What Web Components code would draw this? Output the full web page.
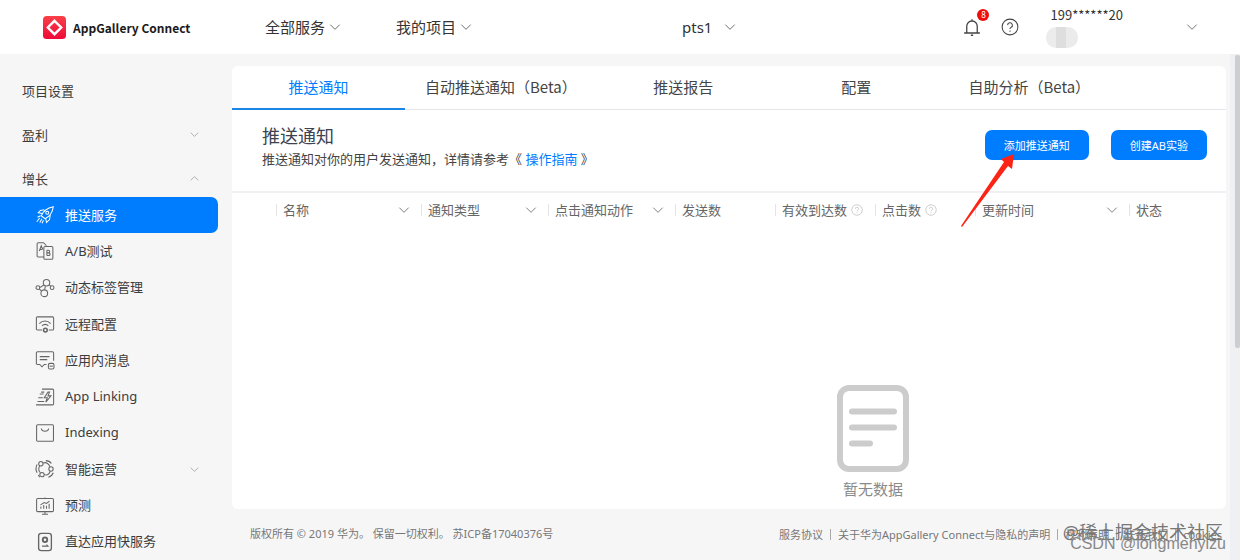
<!DOCTYPE html>
<html lang="zh-CN">
<head>
<meta charset="utf-8">
<title>AppGallery Connect</title>
<style>
html, body { margin: 0; }
body {
  font-family: "Noto Sans", "Noto Sans CJK SC", sans-serif;
  font-size: 13px;
  color: #444;
  background: #f6f6f7;
  --blue: #007dff;
  --line: #e2e4e8;
  --narrow: "Noto Sans CJK SC", sans-serif;
}
</style>
</head>
<body>
<agc-shell>
  <agc-topbar slot="top"></agc-topbar>
  <agc-sidebar slot="side">
    <agc-group>项目设置</agc-group>
    <agc-group arrow="down">盈利</agc-group>
    <agc-group arrow="up">增长</agc-group>
    <agc-item slot="items" icon="rocket" active>推送服务</agc-item>
    <agc-item slot="items" icon="ab">A/B测试</agc-item>
    <agc-item slot="items" icon="tags">动态标签管理</agc-item>
    <agc-item slot="items" icon="remote">远程配置</agc-item>
    <agc-item slot="items" icon="message">应用内消息</agc-item>
    <agc-item slot="items" icon="linking">App Linking</agc-item>
    <agc-item slot="items" icon="indexing">Indexing</agc-item>
    <agc-item slot="items" icon="smart" arrow="down">智能运营</agc-item>
    <agc-item slot="items" icon="predict">预测</agc-item>
    <agc-item slot="items" icon="direct">直达应用快服务</agc-item>
  </agc-sidebar>
  <agc-panel>
    <agc-tabs slot="tabs">
      <agc-tab active>推送通知</agc-tab>
      <agc-tab>自动推送通知（Beta）</agc-tab>
      <agc-tab>推送报告</agc-tab>
      <agc-tab>配置</agc-tab>
      <agc-tab>自助分析（Beta）</agc-tab>
    </agc-tabs>
    <agc-intro slot="intro">
      <agc-button slot="actions" pointed>添加推送通知</agc-button>
      <agc-button slot="actions">创建AB实验</agc-button>
    </agc-intro>
    <agc-table></agc-table>
    <agc-empty>暂无数据</agc-empty>
  </agc-panel>
  <agc-footer slot="foot"></agc-footer>
</agc-shell>

<script>
const define = (name, render) => customElements.define(name, class extends HTMLElement {
  constructor() {
    super();
    this.attachShadow({ mode: 'open' });
  }
  connectedCallback() {
    this.shadowRoot.innerHTML = render(this);
  }
});

const icons = {
  down: '<path d="M5 8.5l7 7 7-7"/>',
  up: '<path d="M5 15.5l7-7 7 7"/>',
  bell: '<path d="M1.500 20h21M5 20v-9a7 7 0 0 1 14 0v9M12 4V1.500M10.500 23h3" stroke-width="1.700"/>',
  help: '<circle cx="12" cy="12" r="10.500"/><path d="M8.800 9.500a3.200 3.200 0 1 1 4.600 3c-1 .5-1.400 1-1.400 2M12 16.500v1.700"/>',
  rocket: '<path d="M7 13c2-5 7-10 16-12-1 9-5 13-11 16l-5-4zM8 10L3 9l3-3 5-1M13 17l1 5 4-4 1-6M6 13l-4 2M5 16l-4 5M8 17l-3 5M10 19l-2 4"/><circle cx="15" cy="9" r="2"/>',
  ab: '<path d="M10 20H3a1.500 1.500 0 0 1-1.500-1.500v-16A1.500 1.500 0 0 1 3 1h7l4 4M12 6h9a1.500 1.500 0 0 1 1.500 1.500v14A1.500 1.500 0 0 1 21 23h-9a1.500 1.500 0 0 1-1.500-1.500v-14A1.500 1.500 0 0 1 12 6zM4.500 12l2.500-7 2 5M5.300 10h3M14.500 11v7M14.500 11h2a1.700 1.700 0 0 1 0 3.500h-2 2.500a1.700 1.700 0 0 1 0 3.500h-2.500"/>',
  tags: '<circle cx="14" cy="5" r="4.300"/><circle cx="2.500" cy="11.500" r="2.500"/><circle cx="11" cy="19" r="4.500"/><circle cx="21.500" cy="11.500" r="2.500"/><path d="M5 11.500l5.500-3.500M17.500 7.500l2 2M12.500 9.500l-1 4.500M4.500 13.500l3 2.500"/>',
  remote: '<path d="M8 20H2a1.500 1.500 0 0 1-1.500-1.500V4A1.500 1.500 0 0 1 2 2.500h20A1.500 1.500 0 0 1 23.500 4v14.500A1.500 1.500 0 0 1 22 20h-5M4.500 11.500c4-4.500 11-4.500 15 0M8 14.500c2.500-2.700 6-2.700 8.500 0"/><circle cx="12.500" cy="20" r="2.500" stroke-width="2"/>',
  message: '<path d="M14 18h-3l-3 3-3-3H2a1.500 1.500 0 0 1-1.500-1.500V2.500A1.500 1.500 0 0 1 2 1h20a1.500 1.500 0 0 1 1.500 1.500V13M5 7.500h13M5 11.500h10"/><rect x="16.500" y="16.500" width="7.500" height="7.500" rx="2"/><path d="M18 20.200h4.500"/>',
  linking: '<path d="M8 1.500h14A1.500 1.500 0 0 1 23.500 3v18A1.500 1.500 0 0 1 22 22.500H0M16 5.500l-5 7.500h4l-2 6 7-8.500h-4l2-5zM5 8h5M7 5.500h4M3 13h6M2 18h9"/>',
  indexing: '<rect x=".8" y="1" width="22.500" height="22" rx="1.500"/><path d="M7 6c1 5 9 5 10 0"/>',
  smart: '<circle cx="6.500" cy="5" r="2.900"/><circle cx="20" cy="12" r="2.900"/><circle cx="8" cy="19.500" r="2.900"/><path d="M9.500 4c4-1.500 7.500 .5 9 5M19 15c-1.500 4-5 5.500-8 4.500M5 8c-2 3-1.500 6.500 .8 9M13 .8c3 0 6 1.500 7.500 4M23 17c-1 3-3.500 5-6.500 6M1.500 6C-.2 9-.2 14 1.500 17M3 20l2 3"/>',
  predict: '<rect x=".8" y="2" width="22.500" height="17.500" rx="1.500"/><path d="M12 19.500v3M8 23h8M6.500 15.500v-3M10.300 15.500v-5M14 15.500v-4M17.500 15.500V9M6 10.500l5-3 3 1 4-3M12 2V.5"/>',
  direct: '<rect x="3.500" y=".5" width="17" height="23" rx="3.500" stroke-width="1.800"/><circle cx="12" cy="9" r="3" stroke-width="2.500"/><path d="M8 17.500h8l-2-2"/>'
};
define('agc-icon', el => `
  <style>
    :host { display: block; flex: none; width: 18px; height: 18px; }
    svg { display: block; width: 100%; height: 100%; fill: none; stroke: currentColor; stroke-width: 1.4; overflow: visible; }
  </style>
  <svg viewBox="0 0 24 24" aria-hidden="true">${icons[el.getAttribute('name')]}</svg>`);

define('agc-shell', () => `
  <style>
    :host { display: flex; flex-direction: column; min-height: 100vh; }
    .body { flex: 1; display: grid; grid-template-columns: 218px minmax(0, 1fr) 5px 5px; }
    .content { display: flex; flex-direction: column; padding: 12px 4px 0 14px; }
    .gutter { background: #eef0f3; }
    .track { background: #f0f0f1; }
    .thumb { height: 58%; margin-top: 1px; background: #cdced0; border-radius: 2px; }
  </style>
  <slot name="top"></slot>
  <div class="body">
    <slot name="side"></slot>
    <div class="content"><slot></slot><slot name="foot"></slot></div>
    <div class="gutter"></div>
    <div class="track"><div class="thumb"></div></div>
  </div>`);

define('agc-topbar', () => `
  <style>
    :host { display: grid; grid-template-columns: 222px 131px 286px minmax(0, 1fr) auto auto; align-items: center;
      height: 54px; padding: 0 40px 0 43px; background: #fff; color: #333; }
    .brand { display: flex; align-items: center; gap: 7px; color: #1a1a1a; font-family: var(--narrow); font-size: 12px; font-weight: 700; text-decoration: none; }
    .brand svg { width: 23px; height: 23px; }
    button { display: flex; align-items: center; gap: 2px; padding: 0; border: 0; background: none; font: inherit; font-size: 15px; line-height: 24px; color: inherit; text-align: left; }
    button agc-icon { width: 16px; height: 16px; color: #666; }
    .project { gap: 10px; }
    .tools { display: flex; gap: 20px; margin-right: 31px; }
    .tools button { position: relative; }
    .tools agc-icon { width: 18px; height: 18px; color: #444; }
    .badge { position: absolute; left: 14px; top: -9px; width: 12px; height: 12px; border-radius: 50%; background: #f00d0d; color: #fff; font-size: 8px; line-height: 12px; text-align: center; }
    .user { gap: 61px; }
    .name { font-family: var(--narrow); font-size: 13px; line-height: 18px; }
    .avatar { width: 32px; height: 21px; margin: 3px 0 0 -4px; border-radius: 10px; background: linear-gradient(90deg, #ececec 0 10px, #dedede 10px 20px, #ebebeb 20px); }
  </style>
  <a class="brand" href="#">
    <svg viewBox="0 0 24 24" aria-hidden="true">
      <defs><linearGradient id="g" x2="0" y2="1"><stop stop-color="#fb4048"/><stop offset="1" stop-color="#ee0a38"/></linearGradient></defs>
      <rect width="24" height="24" rx="4" fill="url(#g)"/>
      <path d="M12 5l7 7-7 7-7-7z" fill="none" stroke="#fff" stroke-width="2.500"/>
    </svg>
    <span>AppGallery Connect</span>
  </a>
  <button>全部服务<agc-icon name="down"></agc-icon></button>
  <button>我的项目<agc-icon name="down"></agc-icon></button>
  <button class="project">pts1<agc-icon name="down"></agc-icon></button>
  <div class="tools">
    <button aria-label="消息"><agc-icon name="bell"></agc-icon><span class="badge">8</span></button>
    <button aria-label="帮助"><agc-icon name="help"></agc-icon></button>
  </div>
  <button class="user"><span><div class="name">199******20</div><div class="avatar"></div></span><agc-icon name="down"></agc-icon></button>`);

define('agc-sidebar', () => `
  <style>
    :host { display: flex; flex-direction: column; }
    .groups { display: flex; flex-direction: column; gap: 8px; padding-top: 19px; }
    .items { flex: 1; display: flex; flex-direction: column; }
  </style>
  <div class="groups"><slot></slot></div>
  <nav class="items"><slot name="items"></slot></nav>`);

const arrow = el => el.hasAttribute('arrow') ? `<agc-icon class="arrow" name="${el.getAttribute('arrow')}"></agc-icon>` : '';

define('agc-group', el => `
  <style>
    :host { display: block; }
    button { display: flex; align-items: center; justify-content: space-between; width: 100%; height: 36px; padding: 0 17px 2px 22px; border: 0; background: none; font: inherit; color: #3c3c3c; }
    .arrow { width: 13px; height: 13px; color: #999; }
  </style>
  <button><span><slot></slot></span>${arrow(el)}</button>`);

define('agc-item', el => `
  <style>
    :host { display: flex; flex: 1 0 36px; }
    a { flex: 1; display: flex; align-items: center; gap: 11px; padding: 0 17px 0 36px; color: #3c3c3c; text-decoration: none; border-radius: 0 7px 7px 0; }
    agc-icon { color: #666; }
    span { flex: 1; padding-bottom: 2px; }
    .arrow { width: 13px; height: 13px; color: #999; }
    :host([active]) a { background: var(--blue); color: #fff; }
    :host([active]) agc-icon { color: #fff; }
  </style>
  <a href="#"><agc-icon name="${el.getAttribute('icon')}"></agc-icon><span><slot></slot></span>${arrow(el)}</a>`);

define('agc-panel', () => `
  <style>
    :host { flex: 1; display: flex; flex-direction: column; overflow: hidden; border-radius: 6px; background: #fff; }
  </style>
  <slot name="tabs"></slot><slot name="intro"></slot><slot></slot>`);

define('agc-tabs', () => `
  <style>:host { display: flex; border-bottom: 1px solid var(--line); }</style>
  <slot></slot>`);

define('agc-tab', () => `
  <style>
    :host { display: block; min-width: 173px; margin-bottom: -1px; }
    button { width: 100%; height: 44px; padding: 0 20px 1px; border: 0; border-bottom: 2px solid transparent; background: none; font-family: var(--narrow); font-size: 15px; color: #444; white-space: nowrap; }
    :host([active]) button { color: var(--blue); border-color: #1a86e8; }
  </style>
  <button><slot></slot></button>`);

define('agc-intro', () => `
  <style>
    :host { display: flex; justify-content: space-between; align-items: flex-start; min-height: 83px; box-sizing: border-box;
      padding: 14px 19px 0 30px; border-bottom: 2px solid #f1f1f3; }
    h1 { margin: 0; font-size: 18px; line-height: 25px; font-weight: 400; color: #3c4350; }
    p { margin: 0; line-height: 20px; color: #444; }
    a { color: var(--blue); text-decoration: none; }
    .actions { display: flex; gap: 22px; padding-top: 6px; }
  </style>
  <div><h1>推送通知</h1><p>推送通知对你的用户发送通知，详情请参考《 <a href="#">操作指南</a> 》</p></div>
  <div class="actions"><slot name="actions"></slot></div>`);

define('agc-button', el => `
  <style>
    :host { display: block; position: relative; }
    button { height: 30px; padding: 0 19px; border: 0; border-radius: 7px; background: var(--blue); color: #fff; font: inherit; font-size: 11px; white-space: nowrap; }
    svg { position: absolute; left: -24px; top: 24px; width: 54px; height: 74px; }
  </style>
  <button><slot></slot></button>
  ${el.hasAttribute('pointed') ? '<svg viewBox="0 0 54 74" aria-hidden="true"><path d="M53 0L51 15L47 12L1 73L0 72L43 8L40 5z" fill="#fc2414"/></svg>' : ''}`);

const columns = [
  ['名称', 145, 'down'], ['通知类型', 127, 'down'], ['点击通知动作', 127, 'down'], ['发送数', 100],
  ['有效到达数', 100, 'help'], ['点击数', 100, 'help'], ['更新时间', 154, 'down'], ['状态', 97]
];
define('agc-table', () => `
  <style>
    :host { display: block; }
    table { width: 100%; table-layout: fixed; border-collapse: collapse; }
    th { height: 33px; padding: 0; font-weight: 400; color: #666; text-align: left; }
    .cell { display: flex; align-items: center; gap: 4px; padding: 0 9px 0 6px; line-height: 12px; border-left: 1px solid #e4e4e4; white-space: nowrap; }
    .down { justify-content: space-between; }
    agc-icon { width: 16px; height: 16px; margin: -2px 0; color: #777; }
    .help agc-icon { width: 12px; height: 12px; color: #bbb; }
  </style>
  <table>
    <colgroup><col style="width:${44 / 9.94}%">${columns.map(c => `<col style="width:${c[1] / 9.94}%">`).join('')}</colgroup>
    <thead><tr><td></td>${columns.map(([text, , icon]) =>
      `<th scope="col"><div class="cell ${icon || ''}"><span>${text}</span>${icon ? `<agc-icon name="${icon}"></agc-icon>` : ''}</div></th>`).join('')}</tr></thead>
  </table>`);

define('agc-empty', () => `
  <style>
    :host { flex: 1; display: flex; flex-direction: column; align-items: center; justify-content: flex-end; gap: 5px; width: 129%;
      padding-bottom: 8px; font-size: 15px; line-height: 24px; color: #8a8a8a; }
    svg { width: 72px; height: 87px; }
  </style>
  <svg viewBox="0 0 72 87" aria-hidden="true" fill="none" stroke="#ccc" stroke-width="6" stroke-linecap="round">
    <rect x="3" y="3" width="66" height="81" rx="9"/><path d="M15 26.500h42M15 42.500h42M15 58.500h18"/>
  </svg>
  <span><slot></slot></span>`);

define('agc-footer', () => `
  <style>
    :host { display: flex; justify-content: space-between; position: relative; height: 51px; padding: 0 4px 0 18px; font-size: 11px; line-height: 50px; color: #777; white-space: nowrap; }
    nav { display: flex; align-items: center; gap: 7px; }
    a { color: inherit; text-decoration: none; }
    i { width: 1px; height: 11px; background: #aaa; }
    .marks { position: absolute; right: 0; top: 12px; color: #777; text-align: right; }
    .marks div { height: 12px; line-height: 22px; font-size: 18px; padding-right: 3px; }
    .marks .latin { font-family: "Liberation Sans", sans-serif; font-size: 16px; padding-right: 0; color: #888; }
  </style>
  <span>版权所有 © 2019 华为。 保留一切权利。 苏ICP备17040376号</span>
  <nav><a href="#">服务协议</a><i></i><a href="#">关于华为AppGallery Connect与隐私的声明</a><i></i><a href="#">权利声明</a><i></i><a href="#">联系我们</a><i></i><a href="#">cookies</a></nav>
  <div class="marks"><div>@稀土掘金技术社区</div><div class="latin">CSDN @longmenyizu</div></div>`);
</script>
</body>
</html>
